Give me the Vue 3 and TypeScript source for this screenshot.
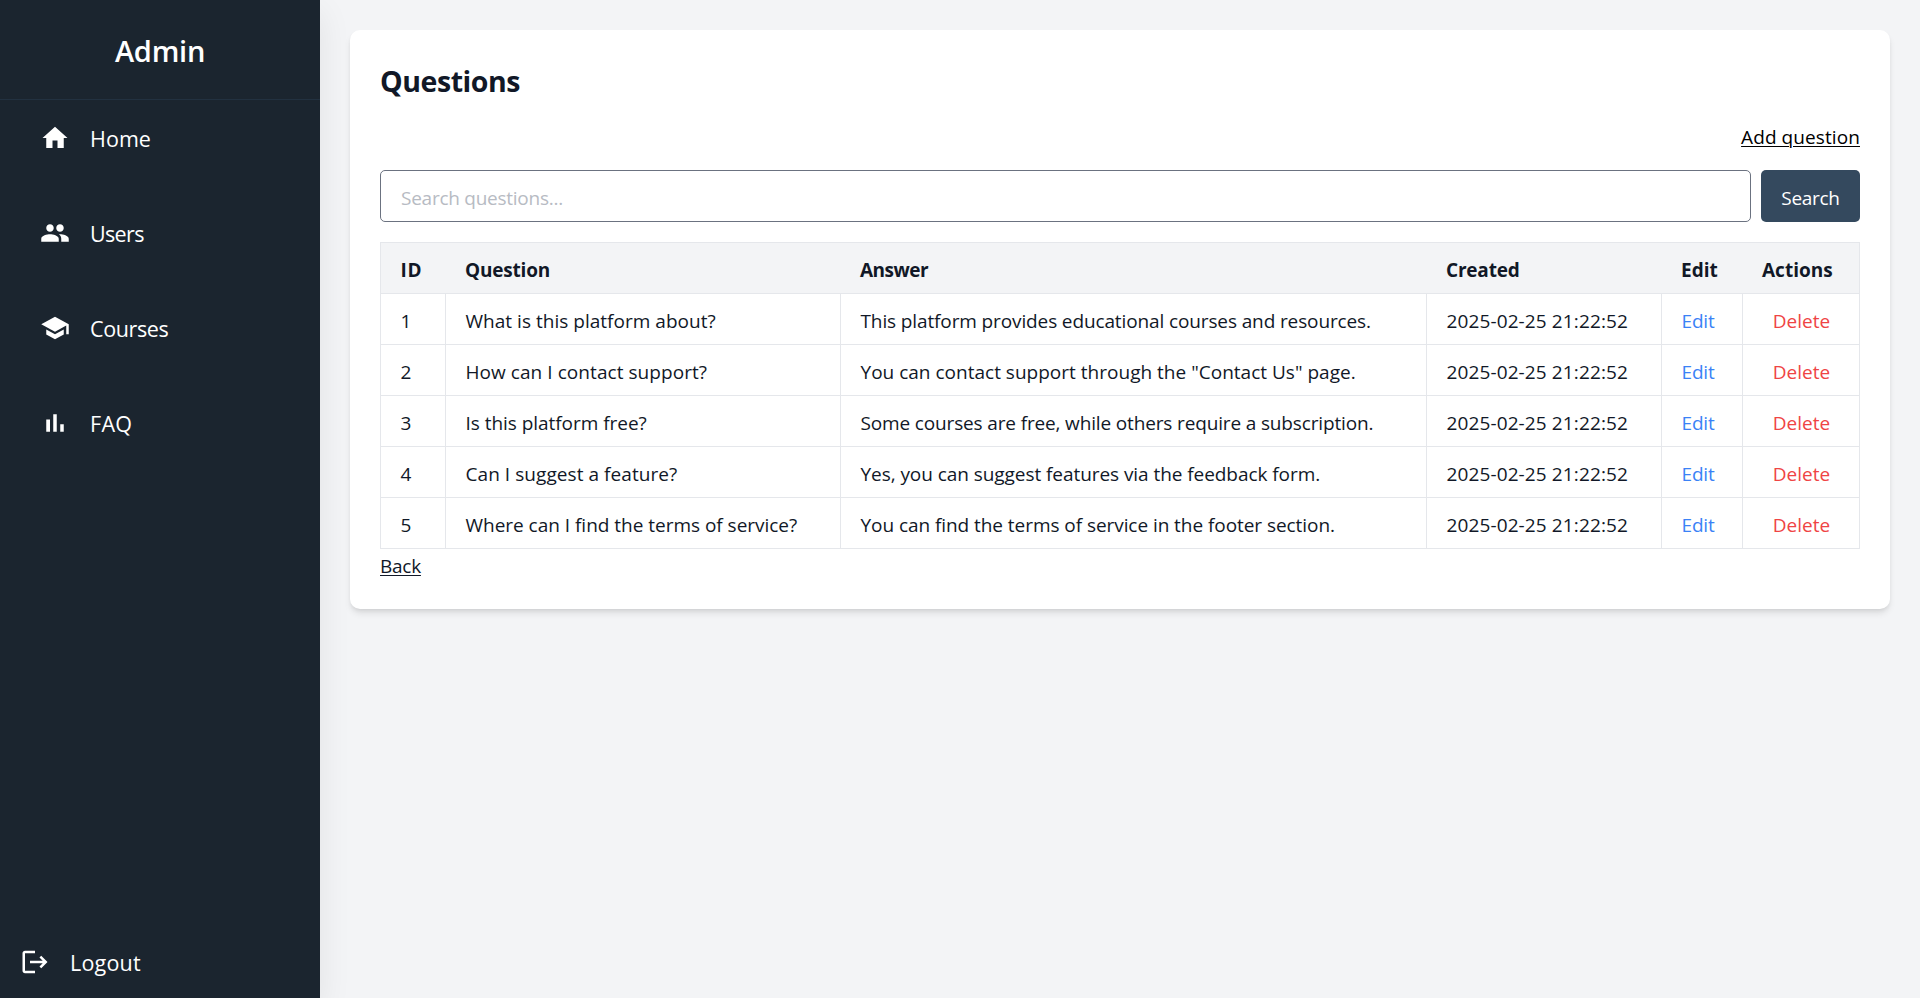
<script setup lang="ts">
interface NavItem {
  label: string
  icon: string
  spacing: string
}

interface QuestionRow {
  id: number
  question: string
  answer: string
  created: string
  questionSpacing: string
  answerSpacing: string
}

const navItems: NavItem[] = [
  { label: 'Home', icon: 'M10 20v-6h4v6h5v-8h3L12 3 2 12h3v8z', spacing: '0.05px' },
  {
    label: 'Users',
    icon: 'M16 11c1.66 0 2.99-1.34 2.99-3S17.66 5 16 5c-1.66 0-3 1.34-3 3s1.34 3 3 3zm-8 0c1.66 0 2.99-1.34 2.99-3S9.66 5 8 5C6.34 5 5 6.34 5 8s1.34 3 3 3zm0 2c-2.33 0-7 1.17-7 3.5V19h14v-2.5c0-2.33-4.67-3.5-7-3.5zm8 0c-.29 0-.62.02-.97.05 1.16.84 1.97 1.97 1.97 3.45V19h6v-2.5c0-2.33-4.67-3.5-7-3.5z',
    spacing: '-0.65px',
  },
  { label: 'Courses', icon: 'M5 13.18v4L12 21l7-3.82v-4L12 17l-7-3.82zM12 3L1 9l11 6 9-4.91V17h2V9L12 3z', spacing: '-0.38px' },
  { label: 'FAQ', icon: 'M5 9.2h3V19H5V9.2zM10.6 5h2.8v14h-2.8V5zm5.6 8H19v6h-2.8v-6z', spacing: '0.3px' },
]

const created = '2025-02-25 21:22:52'

const rows: QuestionRow[] = [
  { id: 1, question: 'What is this platform about?', answer: 'This platform provides educational courses and resources.', created, questionSpacing: '0.024px', answerSpacing: '-0.121px' },
  { id: 2, question: 'How can I contact support?', answer: 'You can contact support through the "Contact Us" page.', created, questionSpacing: '0.06px', answerSpacing: '0.01px' },
  { id: 3, question: 'Is this platform free?', answer: 'Some courses are free, while others require a subscription.', created, questionSpacing: '-0.041px', answerSpacing: '-0.147px' },
  { id: 4, question: 'Can I suggest a feature?', answer: 'Yes, you can suggest features via the feedback form.', created, questionSpacing: '0.06px', answerSpacing: '-0.06px' },
  { id: 5, question: 'Where can I find the terms of service?', answer: 'You can find the terms of service in the footer section.', created, questionSpacing: '-0.02px', answerSpacing: '-0.057px' },
]
</script>

<template>
  <div class="layout">
    <aside class="sidebar">
      <div class="brand">Admin</div>
      <nav class="nav">
        <a v-for="item in navItems" :key="item.label" class="nav-link">
          <svg class="icon" viewBox="0 0 24 24"><path :d="item.icon" /></svg>
          <span :style="{ letterSpacing: item.spacing }">{{ item.label }}</span>
        </a>
      </nav>
      <a class="logout">
        <svg class="icon" viewBox="0 0 24 24">
          <path d="m17 7-1.41 1.41L18.17 11H8v2h10.17l-2.58 2.58L17 17l5-5zM4 5h8V3H4c-1.1 0-2 .9-2 2v14c0 1.1.9 2 2 2h8v-2H4V5z" />
        </svg>
        <span>Logout</span>
      </a>
    </aside>

    <main class="main">
      <section class="card">
        <h1 class="title">Questions</h1>
        <div class="add-row"><a class="add">Add question</a></div>
        <form class="search" @submit.prevent>
          <input class="search-input" type="text" placeholder="Search questions..." />
          <button class="search-button" type="submit">Search</button>
        </form>
        <table class="table">
          <colgroup>
            <col class="col-id" />
            <col class="col-question" />
            <col class="col-answer" />
            <col class="col-created" />
            <col class="col-edit" />
            <col class="col-actions" />
          </colgroup>
          <thead>
            <tr>
              <th class="th-id">ID</th>
              <th class="th-question">Question</th>
              <th class="th-answer">Answer</th>
              <th class="th-created">Created</th>
              <th>Edit</th>
              <th>Actions</th>
            </tr>
          </thead>
          <tbody>
            <tr v-for="row in rows" :key="row.id">
              <td>{{ row.id }}</td>
              <td :style="{ letterSpacing: row.questionSpacing }">{{ row.question }}</td>
              <td :style="{ letterSpacing: row.answerSpacing }">{{ row.answer }}</td>
              <td class="created">{{ row.created }}</td>
              <td><a class="edit">Edit</a></td>
              <td class="actions"><a class="delete">Delete</a></td>
            </tr>
          </tbody>
        </table>
        <a class="back">Back</a>
      </section>
    </main>
  </div>
</template>

<style>
body {
  margin: 0;
  background: #f3f4f6;
}
</style>

<style scoped>
.layout {
  display: flex;
  height: 998px;
  overflow: hidden;
  background: #f3f4f6;
  color: #111827;
  font-family: 'Open Sans', 'Noto Sans', sans-serif;
  font-size: 19px;
  line-height: 30px;
}
.layout * {
  box-sizing: border-box;
}
.sidebar {
  display: flex;
  flex-direction: column;
  flex: none;
  width: 320px;
  background: #1b252f;
  color: #fff;
  box-shadow: 0 12px 31px rgba(0, 0, 0, 0.08);
}
.brand {
  height: 100px;
  padding-top: 2px;
  border-bottom: 1px solid #223140;
  font-size: 29px;
  font-weight: 600;
  letter-spacing: -0.245px;
  line-height: 97px;
  text-align: center;
}
.nav {
  display: flex;
  flex-direction: column;
  gap: 20px;
}
.nav-link,
.logout {
  display: flex;
  align-items: center;
  gap: 20px;
  height: 75px;
  padding-left: 40px;
  font-size: 21.5px;
}
.logout {
  margin-top: auto;
  padding-left: 20px;
  height: 72px;
  letter-spacing: 0.2px;
}
.nav-link span,
.logout span {
  padding-top: 2px;
}
.icon {
  flex: none;
  width: 30px;
  height: 30px;
  fill: currentColor;
}
.main {
  flex: 1;
  padding: 30px;
}
.card {
  height: 579px;
  padding: 30px;
  border-radius: 10px;
  background: #fff;
  box-shadow: 0 5px 7.5px -1px rgba(0, 0, 0, 0.1), 0 2.5px 5px -2.5px rgba(0, 0, 0, 0.1);
}
.title {
  margin: 0;
  padding-top: 1px;
  height: 60px;
  font-size: 28.5px;
  font-weight: 700;
  letter-spacing: -0.446px;
  line-height: 40px;
}
.add-row {
  display: flex;
  justify-content: flex-end;
  height: 50px;
  padding-top: 2px;
}
.add {
  color: #000;
  letter-spacing: 0.09px;
  text-decoration: underline;
  text-decoration-thickness: 1px;
  text-underline-offset: 2px;
}
.search {
  display: flex;
  gap: 10px;
  height: 52px;
  margin-bottom: 20px;
}
.search-input {
  flex: 1;
  min-width: 0;
  padding: 3px 20px 0;
  border: 1px solid #6b7280;
  border-radius: 5px;
  background: #fff;
  color: #111827;
  font: inherit;
  letter-spacing: -0.255px;
  outline: none;
}
.search-input::placeholder {
  color: #b7bbc3;
  opacity: 1;
}
.search-button {
  width: 99px;
  padding: 3px 0 0;
  border: 0;
  border-radius: 5px;
  background: #34495e;
  color: #fff;
  font: inherit;
  letter-spacing: -0.3px;
}
.table {
  width: 1480px;
  border-collapse: collapse;
  table-layout: fixed;
  border: 1px solid #e5e7eb;
}
.col-id { width: 65px; }
.col-question { width: 395px; }
.col-answer { width: 586px; }
.col-created { width: 235px; }
.col-edit { width: 81px; }
.col-actions { width: 117px; }
.table th,
.table td {
  height: 51px;
  padding: 4px 0 0 19.5px;
  text-align: left;
  white-space: nowrap;
  vertical-align: middle;
}
.table thead tr {
  background: #f3f4f6;
}
.table th {
  font-weight: 700;
}
.table td {
  border: 1px solid #e5e7eb;
}
.th-id { letter-spacing: 0.8px; }
.th-question { letter-spacing: -0.2px; }
.th-answer { letter-spacing: -0.5px; }
.th-created { letter-spacing: -0.2px; }
.created { letter-spacing: 0.118px; }
.edit {
  color: #3b82f6;
  letter-spacing: -0.16px;
}
.table td.actions {
  padding-left: 1px;
  text-align: center;
}
.delete {
  color: #ef4444;
}
.back {
  display: inline-block;
  padding-top: 2px;
  letter-spacing: -0.25px;
  text-decoration: underline;
  text-decoration-thickness: 1px;
  text-underline-offset: 2px;
}
</style>
